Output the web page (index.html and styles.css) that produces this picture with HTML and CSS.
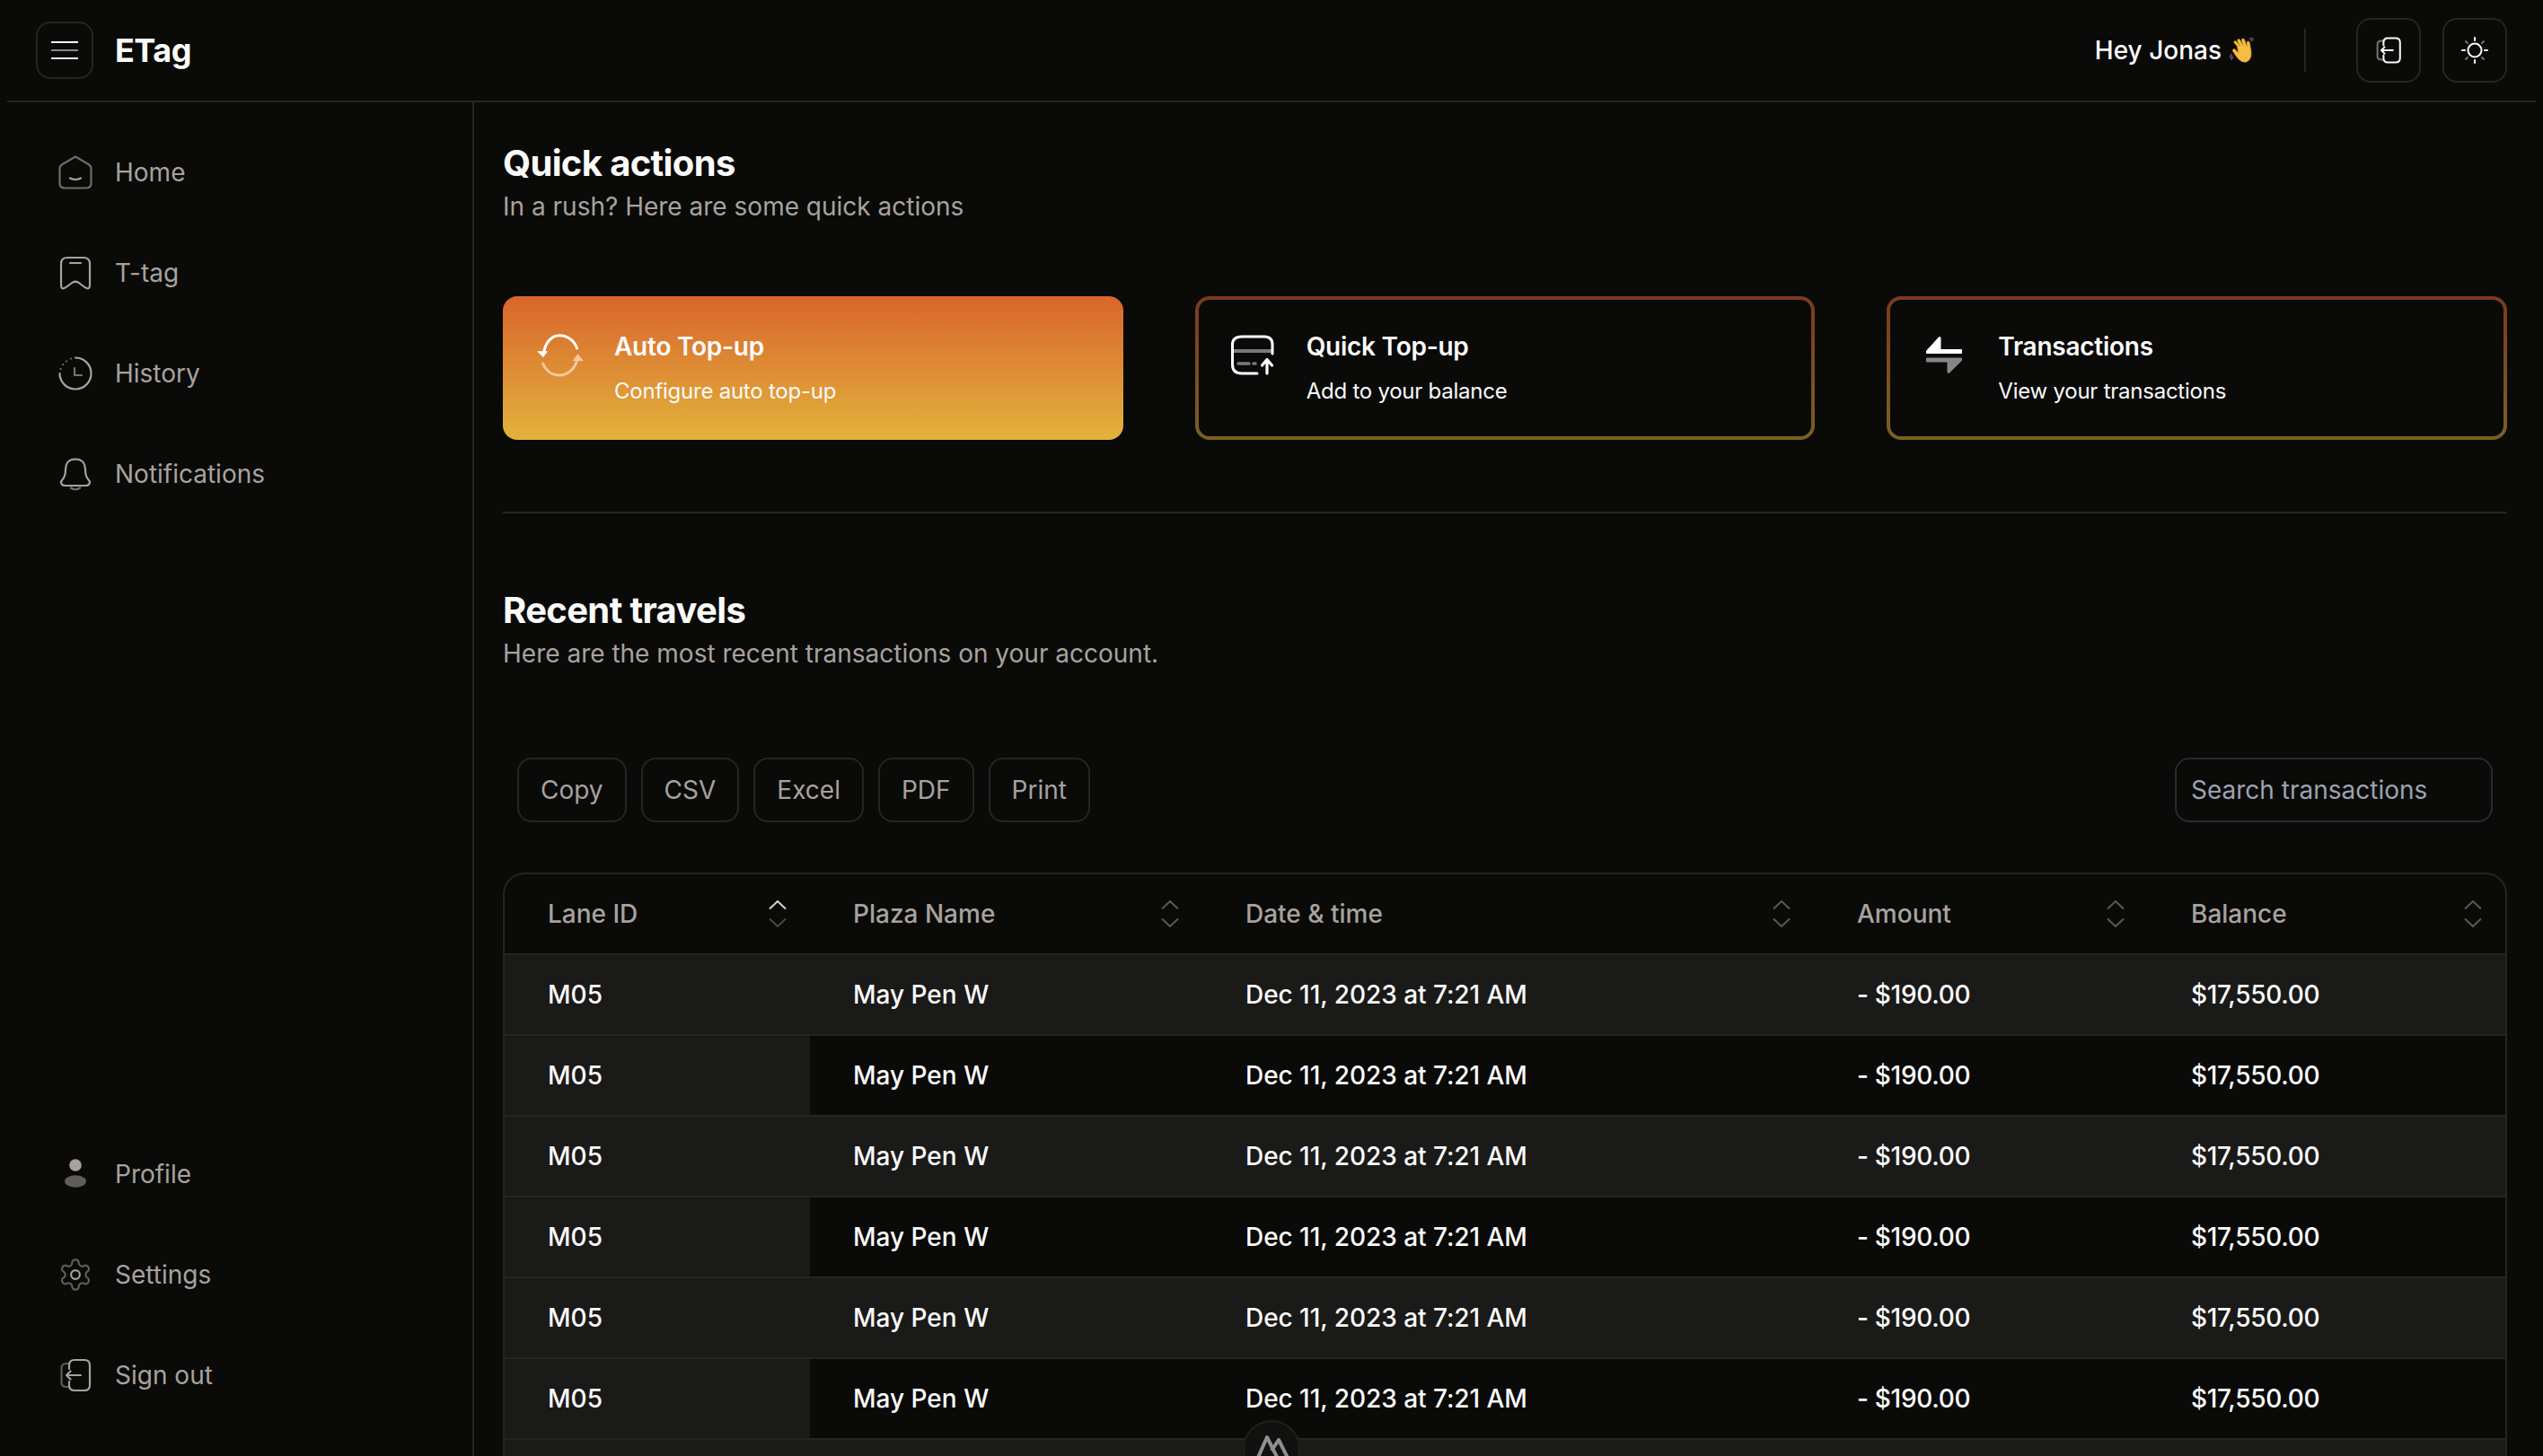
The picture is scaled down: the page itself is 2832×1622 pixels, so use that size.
FILE: index.html
```html
<!DOCTYPE html>
<html lang="en">
<head>
<meta charset="utf-8">
<title>ETag</title>
<link rel="stylesheet" href="styles.css">
</head>
<body>
<div class="app">
  <header class="topbar">
    <div class="brand">
      <button class="icon-btn menu-btn" aria-label="Menu">
        <svg width="30" height="20" viewBox="0 0 30 20" class="ico"><path d="M0 1H30M0 19H30" stroke="#fafaf9" stroke-width="2"/><path d="M0 10H30" stroke="#8b8886" stroke-width="2"/></svg>
      </button>
      <span class="logo">ETag</span>
    </div>
    <div class="top-actions">
      <span class="greeting">Hey Jonas
        <svg class="wave" width="26" height="28" viewBox="3 1 23 27" role="img" aria-label="waving hand"><path d="M9 10 6 6.500Q5 5 6.500 4.500 7.800 4.300 8.500 5.500L12 10 9.500 4.500Q9 3 10.300 2.600 11.600 2.300 12.300 3.600L15.500 9.500 14 3.800Q13.800 2.300 15 2 16.400 1.800 17 3.200L19.500 10.500 19.500 6Q19.800 4.600 21 4.800 22.300 5 22.500 6.500L24 15Q25 22 21.500 25.500 18 28.500 14 26.500 11 25 8.500 21.500L4.500 15.500Q3.800 14 5 13.300 6.200 12.800 7.300 14L10.500 17.500Z" fill="#f5bd42" stroke="#d9952b" stroke-width=".7"/><path d="M22 1.500Q24 2.500 25 5M24 .8Q26 2 26.500 4M2.500 18Q3 21 5 23.500M1.200 20Q2 23 3.500 25" stroke="#77736f" stroke-width="1" fill="none"/></svg>
      </span>
      <span class="vrule"></span>
      <div class="top-btns">
        <button class="icon-btn square" aria-label="Sign out">
          <svg width="32" height="32" viewBox="0 0 40 40" class="ico" fill="none" stroke-width="2.500" stroke-linecap="round" stroke-linejoin="round"><path d="M13 7H10Q4.500 7 4.500 12V28Q4.500 33 10 33H13" stroke="#77736f"/><path d="M13 13V9Q13 3 19 3H30Q36 3 36 9V31Q36 37 30 37H19Q13 37 13 31V27M26 20H10M14.500 15.500 10 20 14.500 24.500" stroke="#fafaf9"/></svg>
        </button>
        <button class="icon-btn square" aria-label="Theme">
          <svg width="32" height="32" viewBox="0 0 32 32" class="ico" fill="none" stroke-width="2" stroke-linecap="round"><circle cx="16" cy="16" r="7.500" stroke="#fafaf9"/><path d="M16 2V5M16 27V30M2 16H5M27 16H30" stroke="#fafaf9"/><path d="M6 6 8 8M24 24 26 26M6 26 8 24M24 8 26 6" stroke="#77736f"/></svg>
        </button>
      </div>
    </div>
  </header>

  <div class="body-row">
    <aside class="sidebar">
      <nav class="nav">
        <a class="nav-item"><svg class="nav-ico" viewBox="0 0 40 40" fill="none" stroke-width="2.200" stroke-linecap="round" stroke-linejoin="round"><path d="M20 2.500 34.500 11Q37.500 12.800 37.500 16V32Q37.500 37.500 32 37.500H8Q2.500 37.500 2.500 32V16Q2.500 12.800 5.500 11Z" stroke="#6f6c69"/><path d="M14 26.500Q20 29.500 26 26.500" stroke="#a8a29e"/></svg><span>Home</span></a>
        <a class="nav-item"><svg class="nav-ico" viewBox="0 0 40 40" fill="none" stroke-width="2.200" stroke-linecap="round" stroke-linejoin="round"><path d="M11 3H29Q36 3 36 10V33Q36 38.500 32.500 37 30 36 24.500 31.500 20 28 15.500 31.500 10 36 7.500 37 4 38.500 4 33V10Q4 3 11 3Z" stroke="#a8a29e"/><path d="M14 9H26" stroke="#a8a29e"/></svg><span>T-tag</span></a>
        <a class="nav-item"><svg class="nav-ico" viewBox="0 0 40 40" fill="none" stroke-width="2.200" stroke-linecap="round" stroke-linejoin="round"><path d="M20 2.500A17.500 17.500 0 1 1 2.500 20" stroke="#a8a29e"/><path d="M15 3.500 15 3.500M10 6.500 10 6.500M6 10 6 10M3.500 15 3.500 15" stroke="#77736f"/><path d="M19 14V22H27" stroke="#77736f"/></svg><span>History</span></a>
        <a class="nav-item"><svg class="nav-ico" viewBox="0 0 40 40" fill="none" stroke-width="2.200" stroke-linecap="round" stroke-linejoin="round"><path d="M20 3.500C11 3.500 9 10 9 15 9 21 8 24 5 27 3 29 4 33 9 33H31C36 33 37 29 35 27 32 24 31 21 31 15 31 10 29 3.500 20 3.500Z" stroke="#a8a29e"/><path d="M15 35.500Q20 39 25 35.500" stroke="#77736f"/></svg><span>Notifications</span></a>
      </nav>
      <nav class="nav">
        <a class="nav-item"><svg class="nav-ico" viewBox="0 0 40 40"><circle cx="20" cy="10" r="6.800" fill="#a8a29e"/><ellipse cx="20" cy="28" rx="12" ry="6.800" fill="#5f5c5a"/></svg><span>Profile</span></a>
        <a class="nav-item"><svg class="nav-ico" viewBox="0 0 24 24" fill="none" stroke-linecap="round" stroke-linejoin="round"><path d="M12.220 2h-.44a2 2 0 0 0-2 2v.18a2 2 0 0 1-1 1.730l-.43.25a2 2 0 0 1-2 0l-.15-.08a2 2 0 0 0-2.730.73l-.22.38a2 2 0 0 0 .73 2.730l.15.1a2 2 0 0 1 1 1.720v.51a2 2 0 0 1-1 1.740l-.15.09a2 2 0 0 0-.73 2.730l.22.38a2 2 0 0 0 2.730.73l.15-.08a2 2 0 0 1 2 0l.43.25a2 2 0 0 1 1 1.730V20a2 2 0 0 0 2 2h.44a2 2 0 0 0 2-2v-.18a2 2 0 0 1 1-1.730l.43-.25a2 2 0 0 1 2 0l.15.08a2 2 0 0 0 2.730-.73l.22-.39a2 2 0 0 0-.73-2.730l-.15-.08a2 2 0 0 1-1-1.740v-.5a2 2 0 0 1 1-1.740l.15-.09a2 2 0 0 0 .73-2.730l-.22-.38a2 2 0 0 0-2.730-.73l-.15.08a2 2 0 0 1-2 0l-.43-.25a2 2 0 0 1-1-1.730V4a2 2 0 0 0-2-2z" stroke="#5f5c5a" stroke-width="1.300"/><circle cx="12" cy="12" r="2.900" stroke="#a8a29e" stroke-width="1.300"/></svg><span>Settings</span></a>
        <a class="nav-item"><svg class="nav-ico" viewBox="0 0 40 40" fill="none" stroke-width="2.200" stroke-linecap="round" stroke-linejoin="round"><path d="M13 7H10Q4.500 7 4.500 12V28Q4.500 33 10 33H13" stroke="#5f5c5a"/><path d="M13 13V9Q13 3 19 3H30Q36 3 36 9V31Q36 37 30 37H19Q13 37 13 31V27M26 20H10M14.500 15.500 10 20 14.500 24.500" stroke="#a8a29e"/></svg><span>Sign out</span></a>
      </nav>
    </aside>

    <main class="content">
      <section class="head first">
        <h2 class="title">Quick actions</h2>
        <p class="sub">In a rush? Here are some quick actions</p>
      </section>

      <section class="cards">
        <a class="card card-solid">
          <svg class="card-ico" viewBox="0 0 48 48" fill="none" stroke-width="3" stroke-linecap="round"><path d="M5.700 21C7 10 14 2 23 1.800 32 1.600 40 8 42.500 16" stroke="#fff"/><path d="M-.7 19.700H9.300L5 25.300Z" fill="#fff" stroke="#fff" stroke-width="1" stroke-linejoin="round"/><path d="M4.500 33C8 41 15 46 23 46 33 46 41 38 43.300 27" stroke="#f2c9a0"/><path d="M43.300 23 38.300 29.700H48.700Z" fill="#f2c9a0" stroke="#f2c9a0" stroke-width="1" stroke-linejoin="round"/></svg>
          <div class="card-text"><div class="card-title">Auto Top-up</div><div class="card-desc">Configure auto top-up</div></div>
        </a>
        <a class="card">
          <svg class="card-ico" viewBox="0 0 48 48" fill="none" stroke-linecap="round" stroke-linejoin="round"><path d="M2 19H46" stroke="#7a7a7a" stroke-width="4" stroke-linecap="butt"/><path d="M8 33H20M25 33H27" stroke="#7a7a7a" stroke-width="3.500"/><path d="M46 22V12Q46 3 37 3H12Q1.500 3 1.500 12V34Q1.500 44 12 44H29" stroke="#fff" stroke-width="3"/><path d="M40 44V29M34.500 35 40 28.500 45.500 35" stroke="#fff" stroke-width="3.200"/></svg>
          <div class="card-text"><div class="card-title">Quick Top-up</div><div class="card-desc">Add to your balance</div></div>
        </a>
        <a class="card">
          <svg class="card-ico" viewBox="0 0 48 48" stroke-linejoin="round" stroke-width="1"><path d="M18.500 3.500 20 4V17.500H43.500V21.500H4.500V19Z" fill="#fff" stroke="#fff"/><path d="M4.500 27H43.500V29.500L29.500 43.500 28 43V31H4.500Z" fill="#868686" stroke="#868686"/></svg>
          <div class="card-text"><div class="card-title">Transactions</div><div class="card-desc">View your transactions</div></div>
        </a>
      </section>

      <hr class="divider">

      <section class="head">
        <h2 class="title">Recent travels</h2>
        <p class="sub">Here are the most recent transactions on your account.</p>
      </section>

      <section class="toolbar">
        <div class="export">
          <button class="ghost">Copy</button>
          <button class="ghost">CSV</button>
          <button class="ghost">Excel</button>
          <button class="ghost">PDF</button>
          <button class="ghost">Print</button>
        </div>
        <input class="search" type="text" placeholder="Search transactions">
      </section>

      <section class="table-wrap">
        <table class="tx">
          <colgroup><col class="c1"><col class="c2"><col class="c3"><col class="c4"><col class="c5"></colgroup>
          <thead>
            <tr>
              <th><div class="th"><span>Lane ID</span><svg class="sort" viewBox="0 0 20 30" fill="none" stroke-width="2"><path d="M1 9.500 10 1 19 9.500" stroke="#d6d3d1"/><path d="M1 20.500 10 29 19 20.500" stroke="#4a4846"/></svg></div></th>
              <th><div class="th"><span>Plaza Name</span><svg class="sort" viewBox="0 0 20 30" fill="none" stroke-width="2" stroke="#5b5957"><path d="M1 9.500 10 1 19 9.500M1 20.500 10 29 19 20.500"/></svg></div></th>
              <th><div class="th"><span>Date &amp; time</span><svg class="sort" viewBox="0 0 20 30" fill="none" stroke-width="2" stroke="#5b5957"><path d="M1 9.500 10 1 19 9.500M1 20.500 10 29 19 20.500"/></svg></div></th>
              <th><div class="th"><span>Amount</span><svg class="sort" viewBox="0 0 20 30" fill="none" stroke-width="2" stroke="#5b5957"><path d="M1 9.500 10 1 19 9.500M1 20.500 10 29 19 20.500"/></svg></div></th>
              <th><div class="th"><span>Balance</span><svg class="sort" viewBox="0 0 20 30" fill="none" stroke-width="2" stroke="#5b5957"><path d="M1 9.500 10 1 19 9.500M1 20.500 10 29 19 20.500"/></svg></div></th>
            </tr>
          </thead>
          <tbody>
            <tr><td>M05</td><td>May Pen W</td><td>Dec 11, 2023 at 7:21 AM</td><td>- $190.00</td><td>$17,550.00</td></tr>
            <tr><td>M05</td><td>May Pen W</td><td>Dec 11, 2023 at 7:21 AM</td><td>- $190.00</td><td>$17,550.00</td></tr>
            <tr><td>M05</td><td>May Pen W</td><td>Dec 11, 2023 at 7:21 AM</td><td>- $190.00</td><td>$17,550.00</td></tr>
            <tr><td>M05</td><td>May Pen W</td><td>Dec 11, 2023 at 7:21 AM</td><td>- $190.00</td><td>$17,550.00</td></tr>
            <tr><td>M05</td><td>May Pen W</td><td>Dec 11, 2023 at 7:21 AM</td><td>- $190.00</td><td>$17,550.00</td></tr>
            <tr><td>M05</td><td>May Pen W</td><td>Dec 11, 2023 at 7:21 AM</td><td>- $190.00</td><td>$17,550.00</td></tr>
            <tr><td></td><td></td><td></td><td></td><td></td></tr>
          </tbody>
        </table>
      </section>
    </main>
  </div>
  <div class="float-badge" aria-hidden="true">
    <svg width="40" height="34" viewBox="0 0 40 34" fill="none" stroke="#8f8f8f" stroke-width="4" stroke-linejoin="round"><path d="M4 30 15 5 26 27"/><path d="M20 20 28 8 38 28"/></svg>
  </div>
</div>
</body>
</html>
```

FILE: styles.css
```css
* { box-sizing: border-box; }
html, body { height: 100%; margin: 0; }
body {
  background: #0a0a09;
  color: #fafaf9;
  font-family: Inter, "Liberation Sans", sans-serif;
  overflow: hidden;
}
.app {
  height: 100vh;
  padding: 0 8px;
  display: flex;
  flex-direction: column;
  position: relative;
  overflow: hidden;
}
.topbar {
  height: 114px;
  flex: none;
  border-bottom: 2px solid #262524;
  padding: 0 32px;
  display: flex;
  align-items: center;
  justify-content: space-between;
}
.brand { display: flex; align-items: center; gap: 24px; }
.logo { font-size: 36px; font-weight: 700; letter-spacing: -0.5px; }
.icon-btn {
  background: transparent;
  border: 2px solid #262524;
  border-radius: 16px;
  display: flex;
  align-items: center;
  justify-content: center;
  padding: 0;
}
.menu-btn { width: 64px; height: 64px; }
.square { width: 72px; height: 72px; }
.top-actions { display: flex; align-items: center; gap: 56px; }
.top-btns { display: flex; gap: 24px; }
.greeting { font-size: 28px; font-weight: 500; display: flex; align-items: center; gap: 10px; }
.wave { overflow: visible; }
.vrule { width: 2px; height: 48px; background: #262524; }
.body-row { flex: 1; display: flex; min-height: 0; }
.sidebar {
  width: 520px;
  flex: none;
  border-right: 2px solid #262524;
  padding: 22px 0 34px 56px;
  display: flex;
  flex-direction: column;
  justify-content: space-between;
}
.nav { display: flex; flex-direction: column; }
.nav-item {
  height: 112px;
  display: flex;
  align-items: center;
  gap: 24px;
  color: #a8a29e;
  font-size: 28px;
}
.nav-ico { width: 40px; height: 40px; flex: none; }
.content { flex: 1; min-width: 0; padding: 0 32px; overflow: hidden; }
.head { margin-top: 84px; }
.head.first { margin-top: 0; padding-top: 44px; }
.title { margin: 0; font-size: 40px; line-height: 48px; font-weight: 650; letter-spacing: -0.65px; }
.sub { margin: 4px 0 0; font-size: 28px; line-height: 40px; color: #a8a29e; }
.cards {
  display: grid;
  grid-template-columns: repeat(3, 1fr);
  gap: 80px;
  margin-top: 80px;
}
.card {
  height: 160px;
  border: 4px solid transparent;
  border-radius: 16px;
  padding: 32px 36px;
  display: flex;
  gap: 36px;
  background: linear-gradient(#0a0a09, #0a0a09) padding-box, linear-gradient(#7b3a1e, #7a6023) border-box;
}
.card-solid { background: linear-gradient(#d9652c, #e2b23c) border-box; }
.card-ico { width: 48px; height: 48px; flex: none; margin-top: 6px; overflow: visible; }
.card-title { font-size: 28px; line-height: 40px; font-weight: 600; letter-spacing: -0.25px; }
.card-desc { font-size: 24px; line-height: 40px; margin-top: 10px; letter-spacing: -0.24px; }
.divider { border: 0; height: 2px; background: #262524; margin: 80px 0 0; }
.toolbar {
  margin-top: 96px;
  padding: 0 16px;
  display: flex;
  justify-content: space-between;
}
.export { display: flex; gap: 16px; }
.ghost {
  height: 72px;
  padding: 0 24px;
  background: transparent;
  border: 2px solid #262524;
  border-radius: 16px;
  color: #a8a29e;
  font: 400 28px Inter, "Liberation Sans", sans-serif;
}
.search {
  width: 354px;
  height: 72px;
  padding: 0 16px;
  background: transparent;
  border: 2px solid #2a2a2c;
  border-radius: 16px;
  color: #fafaf9;
  font: 400 28px Inter, "Liberation Sans", sans-serif;
  outline: none;
}
.search::placeholder { color: #9ca3af; opacity: 1; }
.table-wrap {
  margin-top: 56px;
  border: 2px solid #262524;
  border-radius: 24px 24px 0 0;
  overflow: hidden;
}
.tx { width: 100%; table-layout: fixed; border-collapse: separate; border-spacing: 0; font-size: 28px; }
.c1 { width: 340px; }
.c2 { width: 437px; }
.c3 { width: 681px; }
.c4 { width: 372px; }
.c5 { width: 398px; }
.tx th, .tx td {
  height: 90px;
  padding: 0 0 0 48px;
  border-bottom: 2px solid #262524;
  text-align: left;
}
.tx th { padding-right: 26px; color: #a8a29e; font-weight: 500; }
.tx td { font-weight: 450; color: #fafaf9; }
.tx td:nth-child(3) { letter-spacing: -0.05px; }
.tx td:nth-child(4), .tx td:nth-child(5) { letter-spacing: -0.3px; }
.tx tbody tr:nth-child(odd) td, .tx tbody td:first-child { background: #1a1a19; }
.th { display: flex; align-items: center; justify-content: space-between; }
.sort { width: 20px; height: 30px; flex: none; }
.float-badge {
  position: absolute;
  left: 1384px;
  top: 1582px;
  width: 64px;
  height: 64px;
  border-radius: 50%;
  background: #111110;
  border: 2px solid #1f1f1e;
  display: flex;
  justify-content: center;
  padding-top: 12px;
}
```
